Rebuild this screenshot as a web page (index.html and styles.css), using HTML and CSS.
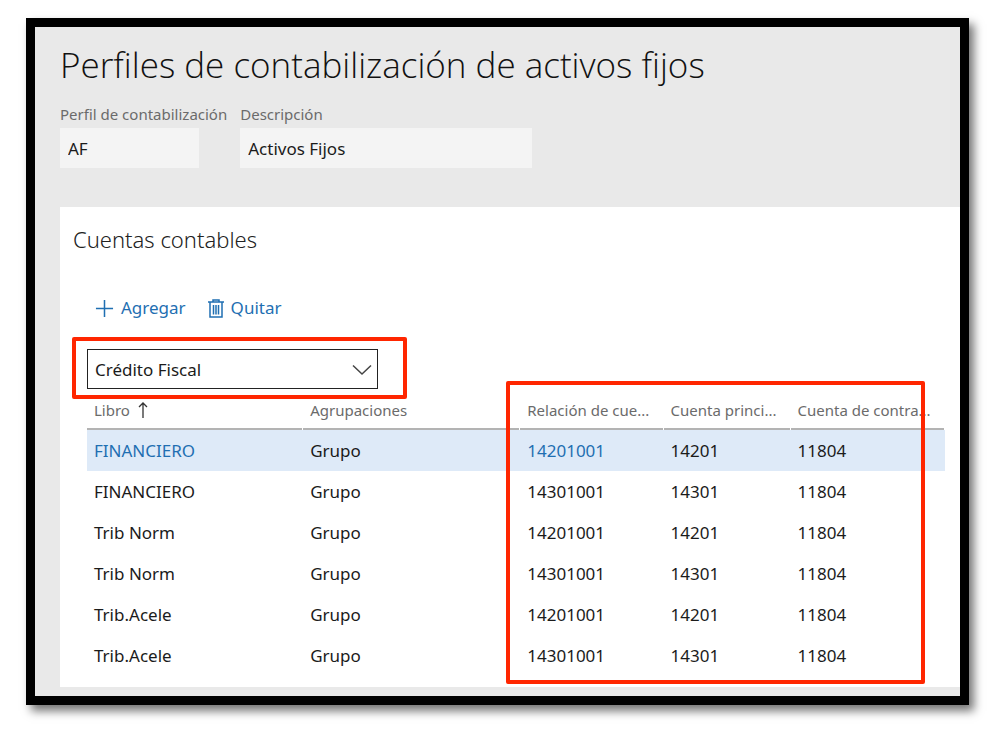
FILE: index.html
```html
<!DOCTYPE html>
<html lang="es">
<head>
<meta charset="utf-8">
<title>Perfiles de contabilización de activos fijos</title>
<link rel="stylesheet" href="styles.css">
</head>
<body>
<main class="frame">
  <header class="page-head">
    <h1 class="title">Perfiles de contabilización de activos fijos</h1>
    <div class="fields">
      <div class="field">
        <label class="field-label" for="profile">Perfil de contabilización</label>
        <input class="field-input field-input-short" id="profile" type="text" value="AF" readonly>
      </div>
      <div class="field">
        <label class="field-label" for="description">Descripción</label>
        <input class="field-input field-input-long" id="description" type="text" value="Activos Fijos" readonly>
      </div>
    </div>
  </header>
  <section class="card">
    <h2 class="card-title">Cuentas contables</h2>
    <div class="toolbar">
      <button class="action" type="button">
        <svg class="icon" viewBox="0 0 20 20" aria-hidden="true"><path d="M10 1v18M1 10h18" fill="none" stroke="currentColor" stroke-width="1.6"/></svg>
        Agregar
      </button>
      <button class="action" type="button">
        <svg class="icon icon-bin" viewBox="0 0 16 19" aria-hidden="true"><path d="M0 3h16M5 2.500V1h6v1.500M2 3.500v14.500h12V3.500" fill="none" stroke="currentColor" stroke-width="1.500"/><path d="M5.500 6v9.500M8 6v9.500M10.500 6v9.500" fill="none" stroke="currentColor" stroke-width="1.500"/></svg>
        Quitar
      </button>
    </div>
    <div class="select-mark">
      <div class="select-wrap">
        <select class="select" aria-label="Tipo de cuenta"><option>Crédito Fiscal</option></select>
        <svg class="chevron" viewBox="0 0 20 12" aria-hidden="true"><path d="M1 1.500l9 8.500 9-8.500" fill="none" stroke="currentColor" stroke-width="1.500"/></svg>
      </div>
    </div>
    <div class="grid">
      <table class="accounts">
        <colgroup><col class="col-book"><col class="col-group"><col class="col-rel"><col class="col-main"><col class="col-offset"></colgroup>
        <thead>
          <tr>
            <th scope="col">Libro <svg class="sort" viewBox="0 0 10 16" aria-hidden="true"><path d="M5 16V1M1 5l4-4 4 4" fill="none" stroke="currentColor" stroke-width="1.300"/></svg></th>
            <th scope="col">Agrupaciones</th>
            <th scope="col">Relación de cue...</th>
            <th scope="col">Cuenta princi...</th>
            <th scope="col">Cuenta de contra...</th>
          </tr>
        </thead>
        <tbody>
          <tr class="selected"><td><a class="link" href="#">FINANCIERO</a></td><td>Grupo</td><td><a class="link" href="#">14201001</a></td><td>14201</td><td>11804</td></tr>
          <tr><td>FINANCIERO</td><td>Grupo</td><td>14301001</td><td>14301</td><td>11804</td></tr>
          <tr><td>Trib Norm</td><td>Grupo</td><td>14201001</td><td>14201</td><td>11804</td></tr>
          <tr><td>Trib Norm</td><td>Grupo</td><td>14301001</td><td>14301</td><td>11804</td></tr>
          <tr><td>Trib.Acele</td><td>Grupo</td><td>14201001</td><td>14201</td><td>11804</td></tr>
          <tr><td>Trib.Acele</td><td>Grupo</td><td>14301001</td><td>14301</td><td>11804</td></tr>
        </tbody>
      </table>
      <div class="grid-mark"></div>
    </div>
  </section>
</main>
</body>
</html>
```
FILE: styles.css
```css
* { box-sizing: border-box; }
body {
  margin: 0;
  padding: 18px 31px 32px 26px;
  background: #fff;
  color: #1b1b1b;
  font: 17px/24px "Noto Sans", "Open Sans", sans-serif;
}
.frame {
  border: 9px solid #000;
  background: #e9e9e9;
  padding: 0 0 9px 25px;
  box-shadow: 5px 6px 9px rgba(0, 0, 0, 0.55);
}
.page-head { padding: 14px 0 39px; }
.title {
  margin: 0;
  font: 300 35px/48px "Open Sans", "Noto Sans", sans-serif;
  color: #111;
}
.fields { display: flex; gap: 13px; padding-top: 13px; }
.field { display: flex; flex-direction: column; align-items: flex-start; gap: 2px; }
.field-label { font-size: 15px; line-height: 24px; color: #6b6b6b; }
.field-input {
  height: 40px;
  border: 0;
  padding: 0 8px;
  background: #f4f4f4;
  color: #1b1b1b;
  font: inherit;
}
.field-input-short { width: 139px; }
.field-input-long { width: 292px; }
.card { background: #fff; padding: 16px 15px 11px 12px; }
.card-title { margin: 0; padding-left: 1px; font-size: 22px; line-height: 32px; font-weight: 300; color: #222; }
.toolbar { display: flex; gap: 22px; padding: 40px 0 16px 23px; }
.action {
  display: flex;
  align-items: center;
  gap: 7px;
  border: 0;
  padding: 0;
  background: none;
  color: #1f6fb2;
  font: inherit;
  line-height: 26px;
}
.icon { width: 19px; height: 19px; }
.icon-bin { width: 16px; }
.select-mark { width: 335px; border: 4px solid #ff2600; border-radius: 2px; padding: 8px 11px 6px; }
.select-wrap { position: relative; width: 291px; }
.select {
  display: block;
  width: 100%;
  height: 40px;
  appearance: none;
  border: 1px solid #222;
  border-radius: 0;
  padding: 2px 7px 0;
  background: #fff;
  color: #1b1b1b;
  font: inherit;
}
.chevron { position: absolute; right: 6px; top: 15px; width: 20px; height: 12px; color: #444; pointer-events: none; }
.grid { position: relative; margin-left: 15px; }
.accounts { width: 100%; table-layout: fixed; border-collapse: collapse; }
.col-book { width: 25.2%; }
.col-group { width: 25.3%; }
.col-rel { width: 16.7%; }
.col-main { width: 14.8%; }
.accounts th {
  height: 31px;
  padding: 0 7px 10px;
  background: linear-gradient(#b3b3b3, #b3b3b3) left bottom / calc(100% - 1px) 2px no-repeat;
  font-size: 15px;
  line-height: 20px;
  font-weight: 400;
  text-align: left;
  color: #6b6b6b;
  white-space: nowrap;
}
.accounts td { height: 41px; padding: 0 7px; }
.sort { width: 10px; height: 16px; margin-left: 4px; color: #333; vertical-align: -2px; }
.selected { background: #deeaf8; }
.link { color: #1f6fb2; text-decoration: none; }
.grid-mark {
  position: absolute;
  left: 48.8%;
  right: 20px;
  top: -18px;
  bottom: -8px;
  border: 4px solid #ff2600;
  border-radius: 2px;
  pointer-events: none;
}
```
